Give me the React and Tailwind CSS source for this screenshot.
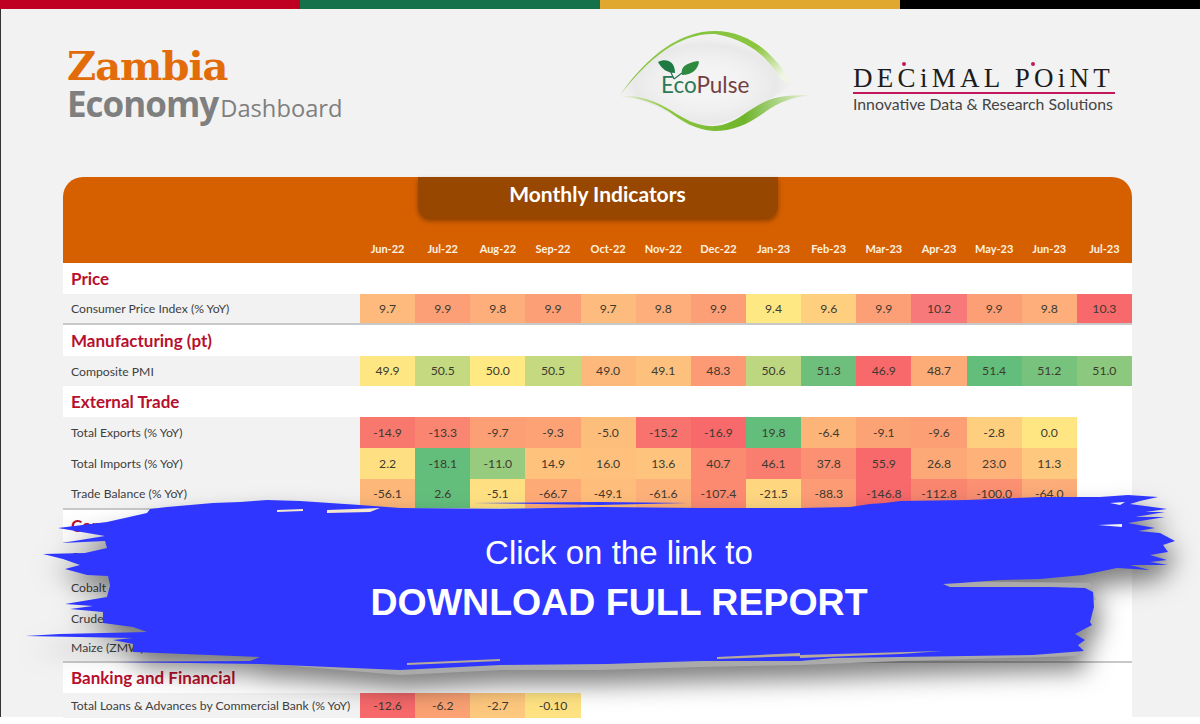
const MONTHS = ['Jun-22', 'Jul-22', 'Aug-22', 'Sep-22', 'Oct-22', 'Nov-22', 'Dec-22', 'Jan-23', 'Feb-23', 'Mar-23', 'Apr-23', 'May-23', 'Jun-23', 'Jul-23']

const BLUE_EDGE = '150,509 167,507 190,505 213,503 240,502 267,500 300,501 330,503 360,505 400,508 500,509 600,507 700,508 800,508 850,507 870,504 885,503 900,501 967,500 1040,497 1100,497 1128,495 1158,497 1140,501 1130,504 1160,508 1167,509 1145,512 1165,512 1135,517 1165,517 1128,523 1155,528 1138,531 1160,533 1175,541 1163,545 1168,552 1150,555 1167,560 1150,562 1168,565 1130,565 1150,570 1117,568 1083,575 1040,579 1000,580 960,583 943,584 950,587 1000,587 1050,587 1085,588 1093,592 1094,607 1090,622 1092,625 1075,634 1085,640 1078,645 1084,651 1033,655 900,657 833,658 800,661 700,661 607,664 500,665 400,670 260,664 117,662 250,661 260,657 133,652 133,644 113,640 133,638 25,636 60,634 147,632 133,627 103,623 103,612 70,609 93,606 65,604 107,597 110,585 108,576 87,575 65,569 80,565 63,559 43,554 85,553 107,548 105,541 62,543 105,536 58,528 107,522 147,513'

const GRAY_EDGE = '943,581 1090,583 1096,600 1040,610 943,600'
const GRAY_BOTTOM = '108,585 128,594 110,600 108,592'
const GRAY_UNDER = '133,648 262,654 270,664 400,675 500,670 600,670 700,667 800,665 900,661 1080,656 1080,645'

const rows = [
  { section: 'Price', height: 'h-[31px]' },
  {
    label: 'Consumer Price Index (% YoY)', height: 'h-[31px]', rule: true,
    cells: [['9.7', '#FEB97C'], ['9.9', '#FD9F76'], ['9.8', '#FDAE7A'], ['9.9', '#FD9F76'], ['9.7', '#FDBB7D'], ['9.8', '#FDAE7A'], ['9.9', '#FD9F76'], ['9.4', '#FEE883'], ['9.6', '#FECF7F'], ['9.9', '#FD9F76'], ['10.2', '#F8797A'], ['9.9', '#FD9F76'], ['9.8', '#FDAE7A'], ['10.3', '#F8696B']],
  },
  { section: 'Manufacturing (pt)', height: 'h-[31px]' },
  {
    label: 'Composite PMI', height: 'h-[30px]',
    cells: [['49.9', '#FEE783'], ['50.5', '#C5D980'], ['50.0', '#FEE983'], ['50.5', '#C5D980'], ['49.0', '#FDB87C'], ['49.1', '#FDC07D'], ['48.3', '#FC9A75'], ['50.6', '#BDD780'], ['51.3', '#6EBE7C'], ['46.9', '#F8696B'], ['48.7', '#FDAC78'], ['51.4', '#63BE7B'], ['51.2', '#77C27C'], ['51.0', '#8CC87D']],
  },
  { section: 'External Trade', height: 'h-[31px]' },
  {
    label: 'Total Exports (% YoY)', height: 'h-[31px]',
    cells: [['-14.9', '#F8786E'], ['-13.3', '#FA8570'], ['-9.7', '#FC9F74'], ['-9.3', '#FCA275'], ['-5.0', '#FDBE7B'], ['-15.2', '#F8736D'], ['-16.9', '#F8696B'], ['19.8', '#63BE7B'], ['-6.4', '#FDB479'], ['-9.1', '#FCA375'], ['-9.6', '#FC9F74'], ['-2.8', '#FECF7F'], ['0.0', '#FFE683']],
  },
  {
    label: 'Total Imports (% YoY)', height: 'h-[31px]',
    cells: [['2.2', '#FEDF82'], ['-18.1', '#63BE7B'], ['-11.0', '#97CB7D'], ['14.9', '#FEC27C'], ['16.0', '#FEC07C'], ['13.6', '#FEC47D'], ['40.7', '#FB8A71'], ['46.1', '#FA7E6F'], ['37.8', '#FB9072'], ['55.9', '#F8696B'], ['26.8', '#FDA977'], ['23.0', '#FEB179'], ['11.3', '#FEC87E']],
  },
  {
    label: 'Trade Balance (% YoY)', height: 'h-[31px]', rule: true,
    cells: [['-56.1', '#FDB779'], ['2.6', '#63BE7B'], ['-5.1', '#FEE082'], ['-66.7', '#FDAA77'], ['-49.1', '#FEBD7A'], ['-61.6', '#FDB078'], ['-107.4', '#FB8A71'], ['-21.5', '#FED680'], ['-88.3', '#FC9B74'], ['-146.8', '#F8696B'], ['-112.8', '#FA8670'], ['-100.0', '#FB9072'], ['-64.0', '#FDAD78']],
  },
  { section: 'Commodity', height: 'h-[31px]' },
  { label: 'Copper', height: 'h-[31px]', cells: [] },
  { label: 'Cobalt', height: 'h-[31px]', cells: [] },
  { label: 'Crude Oil', height: 'h-[30px]', cells: [] },
  { label: 'Maize (ZMW)', height: 'h-[30px]', rule: true, cells: [] },
  { section: 'Banking and Financial', height: 'h-[30px]' },
  {
    label: 'Total Loans & Advances by Commercial Bank (% YoY)', height: 'h-[25px]',
    cells: [['-12.6', '#F8696B'], ['-6.2', '#FCA274'], ['-2.7', '#FEC87E'], ['-0.10', '#FFE383']],
  },
]

function EcoPulseLogo() {
  return (
    <svg width="210" height="115" viewBox="0 0 210 115" className="shrink-0">
      <defs>
        <radialGradient id="eco-haze" cx="50%" cy="55%" r="55%">
          <stop offset="0%" stopColor="#ffffff" stopOpacity="0.1" />
          <stop offset="75%" stopColor="#e6e6e6" stopOpacity="0.8" />
          <stop offset="100%" stopColor="#f2f2f2" stopOpacity="0" />
        </radialGradient>
        <linearGradient id="eco-arc" x1="0" y1="0" x2="1" y2="0.6">
          <stop offset="0%" stopColor="#d5e8b5" />
          <stop offset="35%" stopColor="#86c341" />
          <stop offset="70%" stopColor="#8cc63f" />
          <stop offset="100%" stopColor="#f0f5e6" />
        </linearGradient>
        <linearGradient id="eco-wave" x1="0" y1="0" x2="1" y2="0">
          <stop offset="0%" stopColor="#e8efdc" />
          <stop offset="25%" stopColor="#8cc63f" />
          <stop offset="65%" stopColor="#6fb52c" />
          <stop offset="100%" stopColor="#f0f5e6" />
        </linearGradient>
      </defs>
      <path d="M10 71C40 30 70 7 105 7C140 8 165 30 181 60C165 72 120 100 97 101C70 100 45 74 10 71Z" fill="url(#eco-haze)" />
      <path d="M10 70C38 30 70 6 105 6C138 6 165 28 181 58C176 60 172 56 168 50C160 38 145 16 105 9C70 8 40 32 10 70Z" fill="url(#eco-arc)" />
      <path d="M10 71C40 70 55 82 72 92C85 100 100 103 112 100C130 96 145 78 165 73C178 70 190 70 202 70C185 72 170 76 155 87C138 100 122 106 104 106C85 105 72 96 58 86C45 78 30 73 10 71Z" fill="url(#eco-wave)" />
      <path d="M48 37C56 33 65 36 65 48C57 48 52 44 48 37Z" fill="#1c7a42" />
      <path d="M72 50C70 42 76 38 88 36L89 37C88 44 82 50 72 50Z" fill="#2e8b3e" />
      <path d="M64 54L58 41M64 54L72 48" stroke="#2d6f4e" strokeWidth="1.2" fill="none" />
      <text x="51" y="68" fontFamily="Lato, sans-serif" fontSize="22.5">
        <tspan fill="#2a7a58">Eco</tspan>
        <tspan fill="#74403f">Pulse</tspan>
      </text>
    </svg>
  )
}

function DecimalPointLogo() {
  return (
    <div className="relative w-[262px] pt-[3px]">
      <div className="font-['Liberation_Serif',serif] text-[27px] leading-[27px] tracking-[4.3px] text-[#1c1c1c] whitespace-nowrap">
        DECiMAL POiNT
      </div>
      <span className="absolute left-[49px] top-[0px] h-[4px] w-[4px] rounded-full bg-[#c2185b]" />
      <span className="absolute left-[178px] top-[0px] h-[4px] w-[4px] rounded-full bg-[#c2185b]" />
      <div className="h-[2px] w-[262px] bg-[#c2185b]" />
      <div className="mt-[1px] font-['Lato',sans-serif] text-[15.8px] leading-[18px] text-[#444] whitespace-nowrap">
        Innovative Data &amp; Research Solutions
      </div>
    </div>
  )
}

function Row({ row }) {
  if (row.section) {
    return (
      <div className={`${row.height} flex items-center bg-white pl-2 font-['Lato',sans-serif] text-[17px] font-bold text-[#b80f2e]`}>
        {row.section}
      </div>
    )
  }
  return (
    <div className={`${row.height} flex ${row.rule ? 'border-b-2 border-[#c8c8c8]' : ''}`}>
      <div className="flex w-[297px] shrink-0 items-center bg-[#f2f2f2] pl-2 pt-[2px] text-[#404040] whitespace-nowrap">
        {row.label}
      </div>
      <div className="grid flex-1 grid-cols-14 bg-white">
        {row.cells.map(([value, color], i) => (
          <div key={i} style={{ backgroundColor: color }} className="flex items-center justify-center pt-[1px] text-[#403a30]">
            {value}
          </div>
        ))}
      </div>
    </div>
  )
}

function Brush() {
  return (
    <svg width="1200" height="724" viewBox="0 0 1200 724" className="absolute left-0 top-0 pointer-events-none">
      <g className="drop-shadow-[5px_14px_12px_rgba(0,0,0,0.5)]">
        <polygon points={GRAY_UNDER} fill="#aaaaaa" />
        <polygon points={GRAY_EDGE} fill="#aaaaaa" />
        <polygon points={GRAY_BOTTOM} fill="#aaaaaa" />
        <polygon points={BLUE_EDGE} fill="#2e36ff" />
      </g>
      <path d="M473 503L600 502L687 503L600 505Z" fill="#2e36ff" />
      <path d="M277 510L303 509L303 511L277 512ZM327 510L380 508L370 512L327 513Z" fill="#f5e6cf" />
      <path d="M407 663L500 659L500 661L407 665ZM800 655L943 651L900 654L800 658ZM717 657L800 653L800 656L717 659Z" fill="#b8ab9c" />
      <path d="M1110 503L1125 502L1120 505ZM1122 524L1098 525L1122 527Z" fill="#f2f2f2" />
    </svg>
  )
}

export default function App() {
  return (
    <div className="relative h-[724px] w-[1200px] overflow-hidden bg-white font-['Lato',sans-serif] text-[12.2px]">
      <div className="h-[717px] border-l border-[#333] bg-[#f2f2f2]">
        <div className="-ml-px flex h-[9px]">
          <div className="flex-1 bg-[#c00020]" />
          <div className="flex-1 bg-[#14714a]" />
          <div className="flex-1 bg-[#e0a82e]" />
          <div className="flex-1 bg-black" />
        </div>

        <div className="flex h-[168px]">
          <div className="ml-[66px] w-[543px] pt-[37px]">
            <div className="font-['DejaVu_Serif',serif] text-[40px] font-bold leading-[39px] tracking-[-1px] text-[#e36c0a]">
              Zambia
            </div>
            <div className="flex items-baseline text-[#7f7f7f]">
              <span className="font-['Open_Sans',sans-serif] text-[35px] font-bold leading-[38px] tracking-[-1px]">Economy</span>
              <span className="ml-[2px] font-['Open_Sans',sans-serif] text-[23.7px] leading-[38px]">Dashboard</span>
            </div>
          </div>
          <div className="pt-[16px]">
            <EcoPulseLogo />
          </div>
          <div className="ml-[33px] pt-[53px]">
            <DecimalPointLogo />
          </div>
        </div>

        <div className="ml-[62px] w-[1069px]">
          <div className="flex h-[86px] flex-col items-center rounded-t-[20px] bg-[#d66000]">
            <div className="flex h-[41px] w-[360px] items-center justify-center rounded-b-[12px] bg-[#974700] pb-[7px] text-[21px] font-bold text-white shadow-[0_3px_5px_rgba(0,0,0,0.35)]">
              Monthly Indicators
            </div>
            <div className="mt-auto mb-[5px] flex w-full pl-[297px]">
              <div className="grid flex-1 grid-cols-14">
                {MONTHS.map((m) => (
                  <div key={m} className="text-center text-[11px] font-bold leading-[18px] text-[#fff2e0]">
                    {m}
                  </div>
                ))}
              </div>
            </div>
          </div>
          {rows.map((row, i) => (
            <Row key={i} row={row} />
          ))}
        </div>
      </div>

      <Brush />
      <div className="absolute left-[119px] top-[533px] flex w-[1000px] flex-col items-center font-['Liberation_Sans',sans-serif] text-white">
        <div className="text-[33px] leading-[40px]">Click on the link to</div>
        <div className="mt-[6px] text-[37.5px] font-bold leading-[46px]">DOWNLOAD FULL REPORT</div>
      </div>
    </div>
  )
}
